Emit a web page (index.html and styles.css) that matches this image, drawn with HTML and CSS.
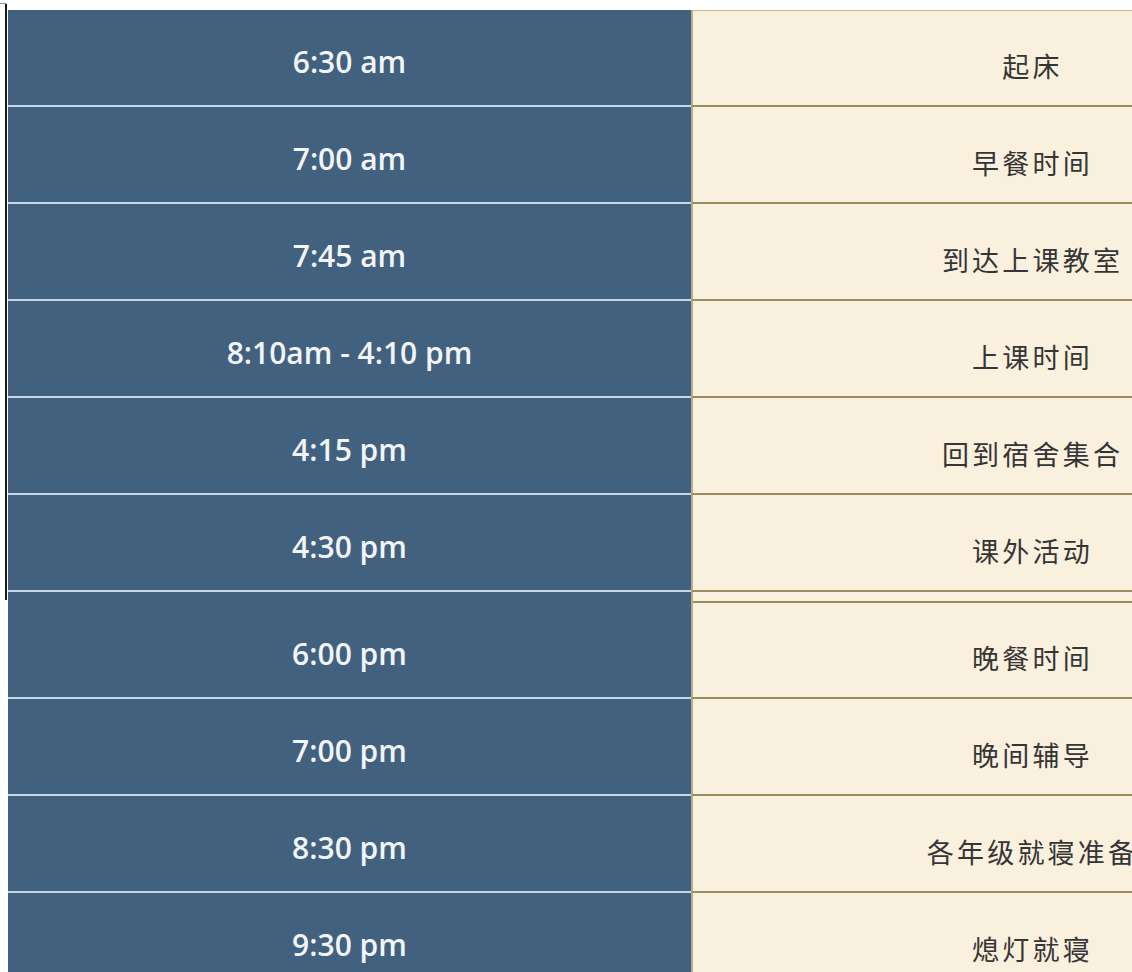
FILE: index.html
```html
<!DOCTYPE html>
<html lang="zh">
<head>
<meta charset="utf-8">
<title>作息时间表</title>
<link rel="stylesheet" href="styles.css">
</head>
<body>
<div class="page">
  <div class="part part-top">
    <div class="row"><div class="time">6:30 am</div><div class="task task-first">起床</div></div>
    <div class="row"><div class="time">7:00 am</div><div class="task">早餐时间</div></div>
    <div class="row"><div class="time">7:45 am</div><div class="task">到达上课教室</div></div>
    <div class="row"><div class="time">8:10am - 4:10 pm</div><div class="task">上课时间</div></div>
    <div class="row"><div class="time">4:15 pm</div><div class="task">回到宿舍集合</div></div>
    <div class="row"><div class="time">4:30 pm</div><div class="task">课外活动</div></div>
  </div>
  <div class="part part-bottom">
    <div class="row row-gap"><div class="time">6:00 pm</div><div class="task">晚餐时间</div></div>
    <div class="row"><div class="time">7:00 pm</div><div class="task">晚间辅导</div></div>
    <div class="row"><div class="time">8:30 pm</div><div class="task">各年级就寝准备</div></div>
    <div class="row"><div class="time">9:30 pm</div><div class="task">熄灯就寝</div></div>
  </div>
</div>
</body>
</html>
```

FILE: styles.css
```css
* { box-sizing: border-box; }

html, body {
  margin: 0;
  padding: 0;
  background: #ffffff;
}

body {
  width: 1132px;
  height: 972px;
  overflow: hidden;
}

.page {
  padding: 10px 0 0 8px;
}

.part {
  display: flex;
  flex-direction: column;
}

.part-top {
  position: relative;
}

.part-top::before {
  content: "";
  position: absolute;
  left: -3px;
  top: -6px;
  width: 2px;
  height: 596px;
  background: #151a1f;
}

.part-top::after {
  content: "";
  position: absolute;
  left: -8px;
  top: -7px;
  width: 6px;
  height: 1px;
  background: #8a8a8a;
}

.row {
  display: grid;
  grid-template-columns: 683px 678px;
  height: 97px;
  flex: none;
}

.time {
  background: #41617f;
  border-bottom: 2px solid #c7d6e5;
  color: #f2f5f8;
  font-family: "Open Sans", "Liberation Sans", sans-serif;
  font-size: 30px;
  font-weight: 600;
  display: flex;
  align-items: center;
  justify-content: center;
  padding-top: 7px;
}

.task {
  background: #faf0de;
  border-left: 2px solid #b7ae92;
  border-bottom: 2px solid #9d8b5c;
  color: #353535;
  font-family: "Noto Sans CJK SC", sans-serif;
  font-size: 27px;
  letter-spacing: 3.2px;
  display: flex;
  align-items: center;
  justify-content: center;
  padding: 15px 0 0 3px;
  white-space: nowrap;
}

.task-first {
  box-shadow: inset 0 1px 0 #c9b98f;
}

.row-gap {
  height: 107px;
}

.row-gap .time {
  padding-top: 17px;
}

.row-gap .task {
  padding-top: 25px;
  background: linear-gradient(to bottom, #faf0de 0, #faf0de 9px, #9d8b5c 9px, #9d8b5c 11px, #faf0de 11px);
}
```
